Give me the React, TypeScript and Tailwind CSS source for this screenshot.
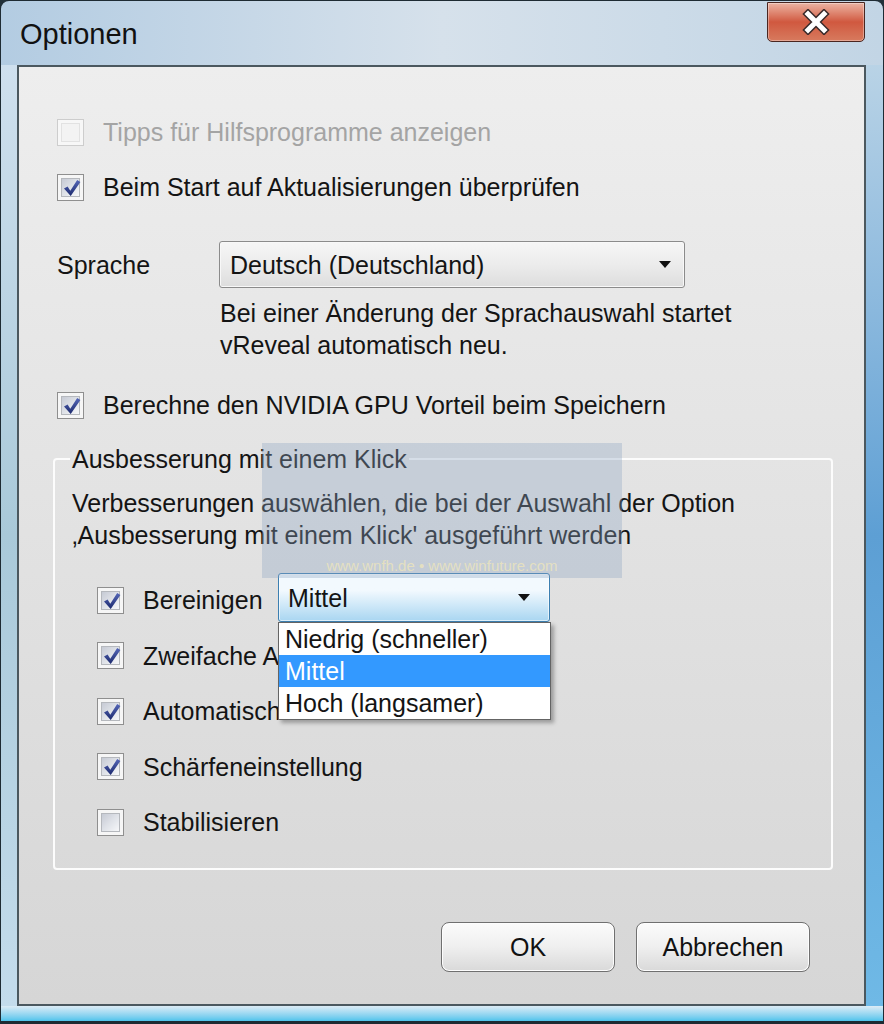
import type { ReactNode } from "react"

function Check() {
  return (
    <svg width="20" height="20" viewBox="0 0 20 20" className="absolute left-[4px] top-[3px]">
      <defs>
        <linearGradient id="chk" x1="0" y1="0" x2="0" y2="1">
          <stop offset="0" stopColor="#5567b8" />
          <stop offset="1" stopColor="#1c2a6e" />
        </linearGradient>
      </defs>
      <path d="M2 10.5 L5.6 8.6 L8.3 12.8 L15.2 2 L18.4 3.9 L8.7 17.9 Z" fill="url(#chk)" />
    </svg>
  )
}

function CheckBox({ checked = false, disabled = false }: { checked?: boolean; disabled?: boolean }) {
  return (
    <span
      className={`relative flex size-[27px] shrink-0 items-center justify-center border ${
        disabled ? "border-[#cdcdcd] bg-[#f7f7f7]" : "border-[#8f8f8f] bg-[#f6f6f6]"
      }`}
    >
      <span
        className={`size-[19px] border ${
          disabled
            ? "border-[#e2e2e2] bg-[#f3f3f3]"
            : "border-[#b5b8bd] bg-linear-to-br from-[#c6cad4] via-[#dfe2e8] to-[#f6f7f9]"
        }`}
      />
      {checked && <Check />}
    </span>
  )
}

function Row({
  checked,
  disabled,
  clip,
  children,
}: {
  checked?: boolean
  disabled?: boolean
  clip?: boolean
  children: ReactNode
}) {
  return (
    <div className="flex h-[32px] items-center gap-[19px] whitespace-nowrap">
      <CheckBox checked={checked} disabled={disabled} />
      {/* labels partly hidden by the open drop-down list are clipped at its left edge */}
      <span className={`${disabled ? "text-[#a4a4a4]" : ""} ${clip ? "w-[135px] overflow-hidden" : ""}`}>
        {children}
      </span>
    </div>
  )
}

function Arrow() {
  return (
    <svg width="12" height="7" viewBox="0 0 12 7">
      <path d="M0 0 H12 L6 7 Z" fill="#111" />
    </svg>
  )
}

function CloseButton() {
  return (
    <div className="mt-[1px] flex h-[40px] w-[98px] items-center justify-center rounded-b-[5px] border border-[#4a2620] bg-linear-to-b from-[#eab3a3] via-[#d0583f] to-[#d77a5e] shadow-[inset_0_0_0_1px_rgba(255,255,255,0.35)]">
      <svg width="30" height="26" viewBox="0 0 30 26">
        <path d="M7 5 L23 21 M23 5 L7 21" stroke="#3a2a2a" strokeWidth="8" strokeLinecap="square" />
        <path d="M7 5 L23 21 M23 5 L7 21" stroke="#ffffff" strokeWidth="5" strokeLinecap="square" />
      </svg>
    </div>
  )
}

function Button({ children }: { children: ReactNode }) {
  return (
    <button className="h-[50px] w-[174px] rounded-[8px] border border-[#707070] bg-linear-to-b from-[#fbfbfb] via-[#efefef] to-[#d9d9d9] text-[25px] text-[#111] shadow-[inset_0_0_0_1px_#fdfdfd]">
      {children}
    </button>
  )
}

export default function App() {
  return (
    <div className="h-[1024px] w-[884px] bg-[#22313a] font-['Liberation_Sans',Arial,sans-serif] text-[25px] leading-[32px] text-[#141414]">
      <div className="flex h-full flex-col overflow-hidden rounded-t-[9px] border border-b-[3px] border-[#1e2b33] bg-linear-to-r from-[#b3cce2] via-[#d6e1eb] to-[#c2d5e5]">
        {/* title bar */}
        <div className="flex h-[64px] shrink-0 items-start justify-between pl-[19px] pr-[18px]">
          <span className="mt-[16px] text-[29px] leading-[34px] text-[#111]">Optionen</span>
          <CloseButton />
        </div>

        <div className="flex flex-1">
          <div className="w-[16px] bg-linear-to-b from-[#cfe0ee] via-[#a9c9d9] to-[#c4dcec]" />

          {/* client area */}
          <div className="relative flex flex-1 flex-col border-2 border-[#4b585f] bg-linear-to-b from-[#eeeeee] to-[#d6d6d6] pl-[34px] pr-[31px] pt-[49px]">
            <div className="ml-[4px] flex flex-col">
              <Row disabled>Tipps für Hilfsprogramme anzeigen</Row>
              <div className="mt-[23px]">
                <Row checked>Beim Start auf Aktualisierungen überprüfen</Row>
              </div>
              <div className="mt-[38px] flex items-center">
                <span className="w-[162px]">Sprache</span>
                <div className="flex h-[47px] w-[466px] items-center justify-between rounded-[3px] border border-[#8b8b8b] bg-linear-to-b from-[#f6f6f6] via-[#ececec] to-[#dddddd] pl-[10px] pr-[13px] shadow-[inset_0_0_0_1px_#f8f8f8]">
                  <span>Deutsch (Deutschland)</span>
                  <Arrow />
                </div>
              </div>
              <p className="ml-[163px] mt-[9px]">
                Bei einer Änderung der Sprachauswahl startet
                <br />
                vReveal automatisch neu.
              </p>
              <div className="mt-[28px]">
                <Row checked>Berechne den NVIDIA GPU Vorteil beim Speichern</Row>
              </div>
            </div>

            <fieldset className="mt-[22px] rounded-[4px] border-2 border-[#fcfcfc] px-[17px] pb-[30px]">
              <legend className="-ml-[2px] px-[2px]">Ausbesserung mit einem Klick</legend>
              <p className="mt-[12px]">
                Verbesserungen auswählen, die bei der Auswahl der Option
                <br />
                ‚Ausbesserung mit einem Klick' ausgeführt werden
              </p>
              <div className="ml-[25px] mt-[33px] flex flex-col gap-[23.5px]">
                <div className="flex h-[32px] items-center">
                  <div className="flex w-[181px] items-center gap-[19px]">
                    <CheckBox checked />
                    <span>Bereinigen</span>
                  </div>
                  <div className="relative -mt-[5px]">
                    <div className="flex h-[49px] w-[272px] items-center justify-between rounded-[3px] border border-[#3c7fb1] bg-linear-to-b from-[#f2f9fe] from-35% to-[#a9d6f1] pl-[9px] pr-[19px] shadow-[inset_0_0_0_1px_rgba(255,255,255,0.6)]">
                      <span>Mittel</span>
                      <Arrow />
                    </div>
                    <div className="absolute left-0 top-full z-10 w-[273px] border border-[#646464] bg-white shadow-[3px_3px_4px_rgba(0,0,0,0.3)]">
                      <div className="h-[32px] pl-[6px]">Niedrig (schneller)</div>
                      <div className="h-[32px] bg-[#3399ff] pl-[6px] text-white">Mittel</div>
                      <div className="h-[32px] pl-[6px]">Hoch (langsamer)</div>
                    </div>
                  </div>
                </div>
                <Row checked clip>
                  Zweifache Auflösung
                </Row>
                <Row checked clip>
                  Automatische Helligkeitsanpassung
                </Row>
                <Row checked>Schärfeneinstellung</Row>
                <Row>Stabilisieren</Row>
              </div>
            </fieldset>

            <div className="mr-[23px] mt-[52px] flex justify-end gap-[21px]">
              <Button>OK</Button>
              <Button>Abbrechen</Button>
            </div>

            {/* watermark */}
            <div className="pointer-events-none absolute left-[243px] top-[376px] z-20 flex h-[135px] w-[360px] flex-col items-center justify-end bg-[#8fa5c4]/35 pb-[3px]">
              <span className="text-[15px] leading-[18px] text-[#f3e9b8]/70">www.wnfh.de • www.winfuture.com</span>
            </div>
          </div>

          <div className="w-[17px] bg-linear-to-b from-[#b9d3e6] via-[#5d9fd4] to-[#6fb9e6]" />
        </div>

        <div className="h-[15px] shrink-0 bg-linear-to-b from-[#dcecf6] to-[#4cc4ec]" />
      </div>
    </div>
  )
}
